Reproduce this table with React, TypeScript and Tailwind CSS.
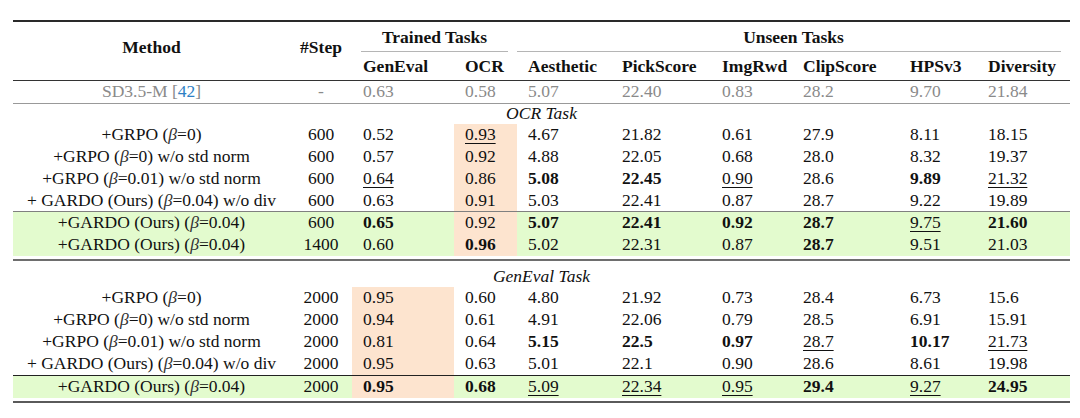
import React from "react";

const COLS = "grid grid-cols-[277px_62px_102px_63px_94px_100px_81px_107px_78px_93px]";

type Row = { m: string; step: string; v: string[] };

const sec1: Row[] = [
  { m: "+GRPO (β=0)", step: "600", v: ["0.52", "_0.93", "4.67", "21.82", "0.61", "27.9", "8.11", "18.15"] },
  { m: "+GRPO (β=0) w/o std norm", step: "600", v: ["0.57", "0.92", "4.88", "22.05", "0.68", "28.0", "8.32", "19.37"] },
  { m: "+GRPO (β=0.01) w/o std norm", step: "600", v: ["_0.64", "0.86", "*5.08", "*22.45", "_0.90", "28.6", "*9.89", "_21.32"] },
  { m: "+ GARDO (Ours) (β=0.04) w/o div", step: "600", v: ["0.63", "0.91", "5.03", "22.41", "0.87", "28.7", "9.22", "19.89"] },
];
const sec1g: Row[] = [
  { m: "+GARDO (Ours) (β=0.04)", step: "600", v: ["*0.65", "0.92", "*5.07", "*22.41", "*0.92", "*28.7", "_9.75", "*21.60"] },
  { m: "+GARDO (Ours) (β=0.04)", step: "1400", v: ["0.60", "*0.96", "5.02", "22.31", "0.87", "*28.7", "9.51", "21.03"] },
];
const sec2: Row[] = [
  { m: "+GRPO (β=0)", step: "2000", v: ["0.95", "0.60", "4.80", "21.92", "0.73", "28.4", "6.73", "15.6"] },
  { m: "+GRPO (β=0) w/o std norm", step: "2000", v: ["0.94", "0.61", "4.91", "22.06", "0.79", "28.5", "6.91", "15.91"] },
  { m: "+GRPO (β=0.01) w/o std norm", step: "2000", v: ["0.81", "0.64", "*5.15", "*22.5", "*0.97", "_28.7", "*10.17", "_21.73"] },
  { m: "+ GARDO (Ours) (β=0.04) w/o div", step: "2000", v: ["0.95", "0.63", "5.01", "22.1", "0.90", "28.6", "8.61", "19.98"] },
];
const sec2g: Row[] = [
  { m: "+GARDO (Ours) (β=0.04)", step: "2000", v: ["*0.95", "*0.68", "_5.09", "_22.34", "_0.95", "*29.4", "_9.27", "*24.95"] },
];

function Method({ s }: { s: string }) {
  const parts = s.split("β");
  return (
    <span>
      {parts[0]}
      {parts.length > 1 && <span className="italic text-[#333]">β</span>}
      {parts[1]}
    </span>
  );
}

function Val({ s }: { s: string }) {
  if (s.startsWith("*")) return <span className="font-bold">{s.slice(1)}</span>;
  if (s.startsWith("_"))
    return <span className="underline decoration-1 underline-offset-[3px]">{s.slice(1)}</span>;
  return <span>{s}</span>;
}

function DataRow({ r, orange }: { r: Row; orange: number }) {
  return (
    <div className={`${COLS} h-[22px] items-stretch`}>
      <div className="flex items-center justify-center whitespace-nowrap">
        <Method s={r.m} />
      </div>
      <div className="flex items-center justify-center">{r.step}</div>
      {r.v.map((x, i) => (
        <div
          key={i}
          className={`flex items-center pl-[11px] whitespace-nowrap ${i === orange ? "bg-[#fde4cf]" : ""}`}
        >
          <Val s={x} />
        </div>
      ))}
    </div>
  );
}

export default function App() {
  return (
    <div className="w-[1080px] h-[418px] bg-white pt-[20px] pl-[13px] text-[17.5px] leading-none text-[#111] font-['Liberation_Serif','Times_New_Roman',serif]">
      <div className="w-[1057px]">
        <div className="h-[2px] bg-[#2a2a2a]" />
        <div className={`${COLS} grid-rows-[30px_28px] font-bold`}>
          <div className="row-span-2 flex items-center justify-center pb-[6px]">Method</div>
          <div className="row-span-2 flex items-center justify-center pb-[6px]">#Step</div>
          <div className="col-span-2 flex flex-col">
            <div className="flex-1 flex items-center justify-center pt-[2px]">Trained Tasks</div>
            <div className="h-[1px] bg-[#b5b5b5] ml-[9px] mr-[9px]" />
          </div>
          <div className="col-span-6 flex flex-col">
            <div className="flex-1 flex items-center justify-center pt-[2px]">Unseen Tasks</div>
            <div className="h-[1px] bg-[#b5b5b5] mr-[9px]" />
          </div>
          {["GenEval", "OCR", "Aesthetic", "PickScore", "ImgRwd", "ClipScore", "HPSv3", "Diversity"].map((h) => (
            <div key={h} className="flex items-center pl-[11px] pt-[2px] whitespace-nowrap">
              {h}
            </div>
          ))}
        </div>
        <div className="h-[1px] bg-[#333]" />
        <div className={`${COLS} h-[22px] text-[#8a8a8a]`}>
          <div className="flex items-center justify-center">
            <span>
              SD3.5-M [<span className="text-[#2d7fc4]">42</span>]
            </span>
          </div>
          <div className="flex items-center justify-center">-</div>
          {["0.63", "0.58", "5.07", "22.40", "0.83", "28.2", "9.70", "21.84"].map((x, i) => (
            <div key={i} className="flex items-center pl-[11px]">
              {x}
            </div>
          ))}
        </div>
        <div className="h-[1px] bg-[#999]" />
        <div className="h-[20px] flex items-center justify-center italic">OCR Task</div>
        {sec1.map((r, i) => (
          <DataRow key={i} r={r} orange={1} />
        ))}
        <div className="relative h-0">
          <div className="absolute left-0 right-0 top-[-1px] h-[1px] bg-[#808080]" />
        </div>
        <div className="bg-[#e3fbce]">
          {sec1g.map((r, i) => (
            <DataRow key={i} r={r} orange={1} />
          ))}
        </div>
        <div className="h-[3px]" />
        <div className="h-[2px] bg-[#6e6e6e]" />
        <div className="h-[26px] flex items-center justify-center italic pt-[5px]">GenEval Task</div>
        {sec2.map((r, i) => (
          <DataRow key={i} r={r} orange={0} />
        ))}
        <div className="h-[1px] bg-[#222]" />
        <div className="bg-[#e3fbce]">
          {sec2g.map((r, i) => (
            <DataRow key={i} r={r} orange={0} />
          ))}
        </div>
        <div className="h-[3px]" />
        <div className="h-[2px] bg-[#5a5a5a]" />
      </div>
    </div>
  );
}
